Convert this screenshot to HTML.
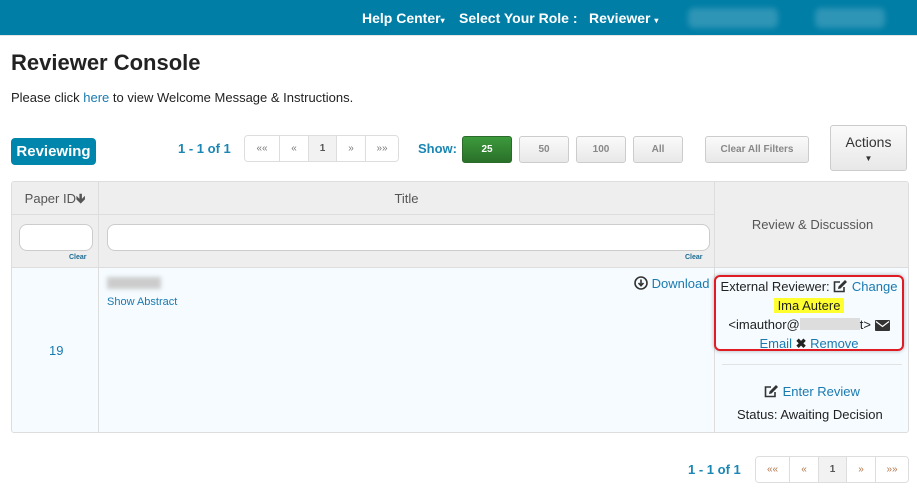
<!DOCTYPE html>
<html><head><style>
*{box-sizing:border-box;margin:0;padding:0}
body{width:917px;height:490px;overflow:hidden;font-family:"Liberation Sans",Arial,sans-serif;background:#fff;position:relative;color:#222}
.a{position:absolute}
.nav{left:0;top:0;width:917px;height:36px;background:#007ea6;border-bottom:1px solid #e5e5e5}
.nav span{position:absolute;top:10px;color:#fff;font-weight:bold;font-size:14px}
.blur{position:absolute;background:rgba(255,255,255,.18);border-radius:6px;filter:blur(3px)}
.link{color:#1a7ab0}
.pg{display:flex;border:1px solid #ddd;border-radius:4px;overflow:hidden;height:27px}
.pg div{border-left:1px solid #ddd;font-size:10px;color:#777;display:flex;align-items:center;justify-content:center;background:#fff}
.pg div:first-child{border-left:none}
.btn{position:absolute;height:27px;border:1px solid #ccc;border-radius:3px;background:linear-gradient(#fafafa,#e8e8e8);font-size:10px;color:#888;font-weight:bold;display:flex;align-items:center;justify-content:center}
.cell{position:absolute;border-right:1px solid #ddd;border-bottom:1px solid #ddd}
.inp{position:absolute;background:#fff;border:1px solid #ccc;border-radius:8px;height:27px}
.clr{position:absolute;font-size:7px;color:#1a6a90;font-weight:bold}
svg{vertical-align:-2px}
</style></head><body>
<div class="a nav">
<span style="left:362px">Help Center<small style="font-size:8px">▾</small></span>
<span style="left:459px">Select Your Role :</span>
<span style="left:589px">Reviewer <small style="font-size:8px">▾</small></span>
<div class="blur" style="left:688px;top:8px;width:90px;height:20px"></div>
<div class="blur" style="left:815px;top:8px;width:70px;height:20px"></div>
</div>
<div class="a" style="left:11px;top:50px;font-size:22px;font-weight:bold;color:#222">Reviewer Console</div>
<div class="a" style="left:11px;top:90px;font-size:13px">Please click <span class="link">here</span> to view Welcome Message &amp; Instructions.</div>
<div class="a" style="left:11px;top:138px;width:85px;height:27px;background:#0085ad;border-radius:4px;color:#fff;font-weight:bold;font-size:15px;text-align:center;line-height:27px">Reviewing</div>
<div class="a" style="left:178px;top:141px;font-size:13px;font-weight:bold;color:#1a86b4">1 - 1 of 1</div>
<div class="a pg" style="left:244px;top:135px;width:155px">
<div style="width:34px">««</div><div style="width:29px">«</div><div style="width:28px;background:#f2f2f2;font-weight:bold;color:#555">1</div><div style="width:29px">»</div><div style="flex:1">»»</div></div>
<div class="a" style="left:418px;top:141px;font-size:13px;font-weight:bold;color:#1a86b4">Show:</div>
<div class="btn" style="left:462px;top:136px;width:50px;background:linear-gradient(#3c9a3c,#2a702a);color:#fff;border-color:#2a6a2a">25</div>
<div class="btn" style="left:519px;top:136px;width:50px">50</div>
<div class="btn" style="left:576px;top:136px;width:50px">100</div>
<div class="btn" style="left:633px;top:136px;width:50px">All</div>
<div class="btn" style="left:705px;top:136px;width:104px">Clear All Filters</div>
<div class="btn" style="left:830px;top:125px;width:77px;height:46px;flex-direction:column;font-size:14px;font-weight:normal;color:#333">Actions<span style="font-size:8px;margin-top:4px">▼</span></div>

<div class="a" style="left:11px;top:181px;width:898px;height:252px;border:1px solid #ddd;border-radius:3px;overflow:hidden;background:#f5fbff">
<div class="cell" style="left:0;top:0;width:87px;height:33px;background:#eee;font-size:13px;color:#555;text-align:center;line-height:33px">Paper ID<b>🡻</b></div>
<div class="cell" style="left:87px;top:0;width:616px;height:33px;background:#eee;font-size:13px;color:#555;text-align:center;line-height:33px">Title</div>
<div class="cell" style="left:703px;top:0;width:195px;height:86px;background:#eee;font-size:13px;color:#555;text-align:center;line-height:86px;border-right:none">Review &amp; Discussion</div>
<div class="cell" style="left:0;top:33px;width:87px;height:53px;background:#eee"></div>
<div class="cell" style="left:87px;top:33px;width:616px;height:53px;background:#eee"></div>
<div class="inp" style="left:7px;top:42px;width:74px"></div>
<div class="clr" style="left:57px;top:72px">Clear</div>
<div class="inp" style="left:95px;top:42px;width:603px"></div>
<div class="clr" style="left:673px;top:72px">Clear</div>
<div class="cell" style="left:0;top:86px;width:87px;height:166px;border-bottom:none"></div>
<div class="cell" style="left:87px;top:86px;width:616px;height:166px;border-bottom:none"></div>
<div class="a link" style="left:37px;top:161px;font-size:13px">19</div>
<div class="a" style="left:95px;top:95px;width:54px;height:12px;background:#ccc;filter:blur(2px)"></div>
<div class="a link" style="left:95px;top:114px;font-size:11px">Show Abstract</div>
<div class="a link" style="left:622px;top:94px;font-size:13px"><svg width="14" height="14" viewBox="0 0 14 14"><circle cx="7" cy="7" r="6" fill="none" stroke="#333" stroke-width="1.6"/><path d="M7 3.5v6M4.5 7l2.5 2.7L9.5 7" fill="none" stroke="#333" stroke-width="1.6"/></svg> Download</div>
</div>
<div class="a" style="left:714px;top:275px;width:190px;height:76px;border:2px solid #e01b24;border-radius:6px;box-shadow:0 0 4px rgba(0,0,0,.3);font-size:13px;text-align:center;line-height:19px">
<div>External Reviewer: <svg width="15" height="14" viewBox="0 0 15 14"><path d="M11 8v4.5H1.5V3H7" fill="none" stroke="#333" stroke-width="1.6"/><path d="M5 10l.5-2.5L12 1l2 2-6.5 6.5z" fill="#333"/></svg> <span class="link">Change</span></div>
<div><span style="background:#ffff30;padding:0 4px">Ima Autere</span></div>
<div>&lt;imauthor@<span style="display:inline-block;width:60px;height:12px;background:#ddd;vertical-align:-1px"></span>t&gt; <svg width="15" height="11" viewBox="0 0 15 11"><rect width="15" height="11" rx="1" fill="#333"/><path d="M1 1.5l6.5 5 6.5-5" fill="none" stroke="#fff" stroke-width="1.2"/></svg></div>
<div><span class="link">Email</span> <b>✖</b> <span class="link">Remove</span></div>
</div>
<div class="a" style="left:722px;top:364px;width:180px;border-top:1px solid #e2e2e2"></div>
<div class="a link" style="left:764px;top:384px;font-size:13px"><svg width="15" height="14" viewBox="0 0 15 14"><path d="M11 8v4.5H1.5V3H7" fill="none" stroke="#333" stroke-width="1.6"/><path d="M5 10l.5-2.5L12 1l2 2-6.5 6.5z" fill="#333"/></svg> Enter Review</div>
<div class="a" style="left:737px;top:407px;font-size:13px">Status: Awaiting Decision</div>

<div class="a" style="left:688px;top:462px;font-size:13px;font-weight:bold;color:#1a86b4">1 - 1 of 1</div>
<div class="a pg" style="left:755px;top:456px;width:154px">
<div style="width:33px;color:#b5744a">««</div><div style="width:29px;color:#b5744a">«</div><div style="width:28px;background:#f2f2f2;font-weight:bold;color:#555">1</div><div style="width:29px;color:#b5744a">»</div><div style="flex:1;color:#b5744a">»»</div></div>
</body></html>
